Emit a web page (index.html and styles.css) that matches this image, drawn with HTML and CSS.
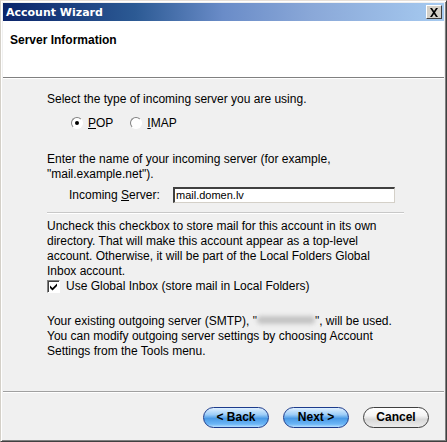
FILE: index.html
```html
<!DOCTYPE html>
<html lang="en">
<head>
  <meta charset="UTF-8" />
  <title>Account Wizard</title>
  <link rel="stylesheet" href="styles.css">
</head>
<body>

  <div class="window">
    <!-- Title bar -->
    <div class="titlebar">
      <span class="title">Account Wizard</span>
      <span class="close-btn">
        <svg width="10" height="9" viewBox="0 0 10 9">
          <path d="M1 0 L3 0 L5 3 L7 0 L9 0 L6 4.5 L9 9 L7 9 L5 6 L3 9 L1 9 L4 4.5 Z" fill="#000"/>
        </svg>
      </span>
    </div>

    <!-- Page header -->
    <div class="page-header">
      <h1>Server Information</h1>
    </div>

    <!-- Wizard content -->
    <div class="content">
      <p>Select the type of incoming server you are using.</p>
      <div class="radios">
        <label class="radio"><span class="radio-dot checked"></span><span><u>P</u>OP</span></label>
        <label class="radio"><span class="radio-dot"></span><span><u>I</u>MAP</span></label>
      </div>

      <p class="gap-top">Enter the name of your incoming server (for example, "mail.example.net").</p>
      <div class="server-row">
        <span class="server-label">Incoming <u>S</u>erver:</span>
        <span class="text-input">mail.domen.lv</span>
      </div>

      <hr class="sep">

      <p>Uncheck this checkbox to store mail for this account in its own directory. That will make this account appear as a top-level account. Otherwise, it will be part of the Local Folders Global Inbox account.</p>
      <label class="check">
        <span class="check-box">
          <svg width="9" height="9" viewBox="0 0 9 9">
            <path d="M1 3.5 L3.5 6 L8 1.5 L8 4 L3.5 8.5 L1 6 Z" fill="#000"/>
          </svg>
        </span>
        <span>Use Global Inbox (store mail in Local Folders)</span>
      </label>

      <p class="gap-top2">Your existing outgoing server (SMTP), "<span class="blur"></span>", will be used. You can modify outgoing server settings by choosing Account Settings from the Tools menu.</p>
    </div>

    <!-- Buttons -->
    <div class="footer">
      <button class="btn blue">&lt; Back</button>
      <button class="btn blue">Next &gt;</button>
      <button class="btn plain">Cancel</button>
    </div>
  </div>

</body>
</html>
```

FILE: styles.css
```css
/* Base */
body {
  margin: 0;
  padding: 0;
  background: #f0f0f0;
  font-family: 'Liberation Sans', Arial, sans-serif;
  font-size: 12px;
  color: #000;
}

.window {
  width: 447px;
  height: 442px;
  box-sizing: border-box;
  background: #f0f0f0;
  border-top: 1px solid #e8e0d8;
  border-left: 1px solid #d4d0c8;
  border-right: 1px solid #404040;
  border-bottom: 1px solid #404040;
  box-shadow: inset 1px 1px 0 #fff, inset -1px -1px 0 #808080;
  padding: 2px;
  display: flex;
  flex-direction: column;
}

/* Title bar */
.titlebar {
  height: 18px;
  flex: none;
  display: flex;
  align-items: center;
  justify-content: space-between;
  padding: 0 2px 0 3px;
  background: linear-gradient(to right, #0a246a 0%, #2c5a94 30%, #6a8cc8 50%, #8aa8d8 70%, #a6caf0 100%);
}

.title {
  color: #fff;
  font-family: 'DejaVu Sans', Tahoma, sans-serif;
  font-weight: bold;
  font-size: 11px;
}

.close-btn {
  width: 16px;
  height: 14px;
  box-sizing: border-box;
  background: #d4d0c8;
  border-top: 1px solid #fff;
  border-left: 1px solid #fff;
  border-right: 1px solid #404040;
  border-bottom: 1px solid #404040;
  display: flex;
  align-items: center;
  justify-content: center;
}

/* Header */
.page-header {
  background: #fff;
  height: 57px;
  flex: none;
  border-bottom: 1px solid #808080;
  box-shadow: 0 1px 0 #fff;
  padding: 12px 7px 0;
  box-sizing: border-box;
}

.page-header h1 {
  margin: 0;
  font-size: 12px;
  font-weight: bold;
}

/* Content */
.content {
  flex: 1;
  padding: 14px 42px 0 44px;
}

.content p {
  margin: 0;
  line-height: 15px;
}

.radios {
  display: flex;
  gap: 17px;
  padding: 9px 0 0 24px;
}

.radio {
  display: flex;
  align-items: center;
  gap: 5px;
}

.radio-dot {
  width: 10px;
  height: 10px;
  border-radius: 50%;
  border: 1px solid #808080;
  border-right-color: #fff;
  border-bottom-color: #fff;
  background: #fff;
  position: relative;
}

.radio-dot.checked::after {
  content: "";
  position: absolute;
  left: 3px;
  top: 3px;
  width: 4px;
  height: 4px;
  border-radius: 50%;
  background: #000;
}

.gap-top {
  padding-top: 22px;
}

.server-row {
  display: flex;
  align-items: center;
  padding: 5px 0 0 22px;
}

.server-label {
  width: 104px;
}

.text-input {
  width: 222px;
  height: 16px;
  box-sizing: border-box;
  background: #fff;
  border-top: 2px solid #404040;
  border-left: 2px solid #404040;
  border-right: 1px solid #d4d0c8;
  border-bottom: 1px solid #d4d0c8;
  font-size: 11px;
  line-height: 12px;
  padding-left: 1px;
}

.sep {
  margin: 9px -2px 5px 0;
  border: none;
  border-top: 1px solid #c8c8c8;
  border-bottom: 1px solid #fff;
}

.check {
  display: flex;
  align-items: center;
  gap: 6px;
  line-height: 15px;
}

.check-box {
  width: 13px;
  height: 13px;
  box-sizing: border-box;
  background: #fff;
  border-top: 1px solid #808080;
  border-left: 1px solid #808080;
  border-right: 1px solid #fff;
  border-bottom: 1px solid #fff;
  box-shadow: inset 1px 1px 0 #404040;
  display: flex;
  align-items: center;
  justify-content: center;
}

.gap-top2 {
  padding-top: 20px;
}

.blur {
  display: inline-block;
  width: 58px;
  height: 8px;
  vertical-align: 1px;
  background: #c4c4c4;
  filter: blur(2px);
  border-radius: 4px;
}

/* Footer */
.footer {
  height: 48px;
  flex: none;
  box-sizing: border-box;
  border-top: 1px solid #a0a0a0;
  box-shadow: inset 0 1px 0 #fff;
  display: flex;
  align-items: center;
  justify-content: flex-end;
  gap: 14px;
  padding: 3px 15px 0 0;
}

.btn {
  width: 66px;
  height: 21px;
  border-radius: 11px;
  font-family: 'Liberation Sans', Arial, sans-serif;
  font-size: 12px;
  font-weight: bold;
  color: #000;
  padding: 0;
}

.btn.blue {
  border: 1px solid #1d3c8c;
  background: linear-gradient(to bottom, #e0f0ff 0%, #9ccdf8 35%, #4a9ae6 55%, #6cb6f6 85%, #b8e0ff 100%);
}

.btn.plain {
  border: 1px solid #404040;
  background: linear-gradient(to bottom, #ffffff 0%, #f4f4f4 40%, #d8d8d8 60%, #ececec 100%);
}
```
